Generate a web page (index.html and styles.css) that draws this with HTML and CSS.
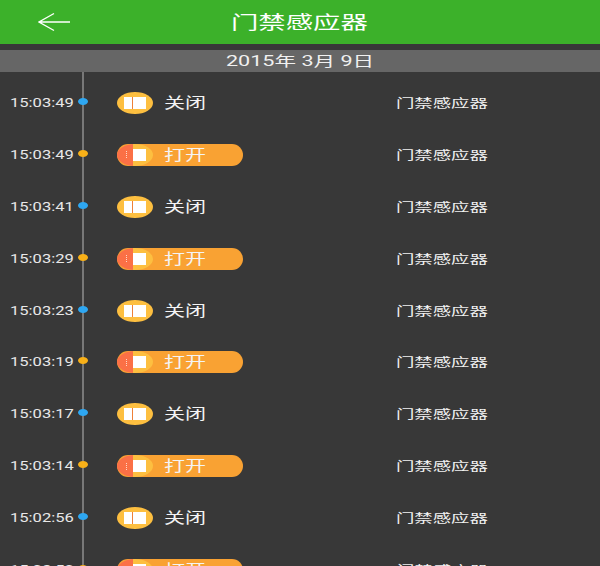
FILE: index.html
```html
<!DOCTYPE html>
<html lang="zh">
<head>
<meta charset="utf-8">
<title>门禁感应器</title>
<link rel="stylesheet" href="styles.css">
</head>
<body>
<div class="app">
  <header class="topbar">
    <svg class="back" width="32" height="20" viewBox="0 0 32 20" fill="none" stroke="#fff" stroke-width="1.3"><path d="M32 10H1M16 1.500 1 10l15 8.500"/></svg>
    <h1 class="title"><span class="stretch">门禁感应器</span></h1>
  </header>
  <div class="date"><span class="stretch">2015年 3月 9日</span></div>
  <main class="list">
    <div class="row closed"><div class="time"><span class="stretch">15:03:49</span></div><div class="rail"></div><div class="status"><div class="knob"><i class="grip"></i><b class="pad"></b></div><span class="state"><span class="stretch">关闭</span></span></div><div class="device"><span class="stretch">门禁感应器</span></div></div>
    <div class="row open"><div class="time"><span class="stretch">15:03:49</span></div><div class="rail"></div><div class="status"><div class="knob"><i class="grip"></i><b class="pad"></b></div><span class="state"><span class="stretch">打开</span></span></div><div class="device"><span class="stretch">门禁感应器</span></div></div>
    <div class="row closed"><div class="time"><span class="stretch">15:03:41</span></div><div class="rail"></div><div class="status"><div class="knob"><i class="grip"></i><b class="pad"></b></div><span class="state"><span class="stretch">关闭</span></span></div><div class="device"><span class="stretch">门禁感应器</span></div></div>
    <div class="row open"><div class="time"><span class="stretch">15:03:29</span></div><div class="rail"></div><div class="status"><div class="knob"><i class="grip"></i><b class="pad"></b></div><span class="state"><span class="stretch">打开</span></span></div><div class="device"><span class="stretch">门禁感应器</span></div></div>
    <div class="row closed"><div class="time"><span class="stretch">15:03:23</span></div><div class="rail"></div><div class="status"><div class="knob"><i class="grip"></i><b class="pad"></b></div><span class="state"><span class="stretch">关闭</span></span></div><div class="device"><span class="stretch">门禁感应器</span></div></div>
    <div class="row open"><div class="time"><span class="stretch">15:03:19</span></div><div class="rail"></div><div class="status"><div class="knob"><i class="grip"></i><b class="pad"></b></div><span class="state"><span class="stretch">打开</span></span></div><div class="device"><span class="stretch">门禁感应器</span></div></div>
    <div class="row closed"><div class="time"><span class="stretch">15:03:17</span></div><div class="rail"></div><div class="status"><div class="knob"><i class="grip"></i><b class="pad"></b></div><span class="state"><span class="stretch">关闭</span></span></div><div class="device"><span class="stretch">门禁感应器</span></div></div>
    <div class="row open"><div class="time"><span class="stretch">15:03:14</span></div><div class="rail"></div><div class="status"><div class="knob"><i class="grip"></i><b class="pad"></b></div><span class="state"><span class="stretch">打开</span></span></div><div class="device"><span class="stretch">门禁感应器</span></div></div>
    <div class="row closed"><div class="time"><span class="stretch">15:02:56</span></div><div class="rail"></div><div class="status"><div class="knob"><i class="grip"></i><b class="pad"></b></div><span class="state"><span class="stretch">关闭</span></span></div><div class="device"><span class="stretch">门禁感应器</span></div></div>
    <div class="row open"><div class="time"><span class="stretch">15:02:50</span></div><div class="rail"></div><div class="status"><div class="knob"><i class="grip"></i><b class="pad"></b></div><span class="state"><span class="stretch">打开</span></span></div><div class="device"><span class="stretch">门禁感应器</span></div></div>
  </main>
</div>
</body>
</html>
```
FILE: styles.css
```css
* { box-sizing: border-box; }
html, body { margin: 0; height: 100%; overflow: hidden; }
body { background: #383838; color: #fff; font-family: Roboto, "Noto Sans CJK SC", sans-serif; }
.app { width: 600px; height: 566px; overflow: hidden; display: flex; flex-direction: column; }
.stretch { display: inline-block; white-space: pre; transform: scaleX(1.5); transform-origin: 0 50%; }

.topbar { flex: none; height: 44px; background: #3cb12a; display: flex; align-items: center; padding-left: 38px; }
.back { flex: none; display: block; }
.title { margin: 2px 0 0 161px; font-size: 18px; font-weight: 400; line-height: 42px; }
.title .stretch { transform: scaleX(1.52); }

.date { flex: none; height: 22px; margin-top: 6px; background: #666; padding-left: 226px; font-size: 14px; line-height: 22px; color: #f0f0f0; }
.date .stretch { transform: scaleX(1.54); }

.list { flex: none; display: flex; flex-direction: column; }
.list::before { content: ""; flex: none; width: 2px; height: 5px; margin-left: 82px; background: #787878; }
.row { flex: none; height: 51.9px; display: flex; align-items: center; }

.time { flex: none; width: 82px; padding-left: 10px; font-size: 12px; color: #e8e8e8; }
.time .stretch { transform: scaleX(1.38); }

.rail { flex: none; align-self: stretch; width: 2px; background: #787878; position: relative; }
.rail::after { content: ""; position: absolute; left: -4px; top: 50%; margin-top: -5px; width: 10px; height: 7px; border-radius: 50%; }
.closed .rail::after { background: #2ea7f2; }
.open .rail::after { background: #f8b018; }

.status { flex: none; width: 126px; height: 22px; margin-left: 33px; border-radius: 11px; display: flex; align-items: center; }
.open .status { background: #f9a233; }

.knob { flex: none; width: 36px; height: 22px; border-radius: 50%; display: flex; align-items: center; }
.closed .knob { background: #fdbf40; justify-content: center; }
.open .knob { background: linear-gradient(90deg, #fb7046 16px, #fdbf40 16px); padding-left: 9px; }

.pad { display: block; background: #fff; }
.closed .pad { width: 22px; height: 12px; background: linear-gradient(90deg, #fff 8px, #ee8038 8px, #ee8038 9px, #fff 9px); }
.open .pad { width: 13px; height: 12px; margin-left: 6px; }

.grip { display: none; }
.open .grip { display: block; width: 1px; height: 7px; border-left: 1px dotted #ffd9c8; }

.state { flex: none; margin-left: 11px; font-size: 15px; line-height: 22px; color: #f4f4f4; }
.state .stretch { transform: scaleX(1.4); }

.device { flex: none; margin-left: 153px; padding-bottom: 1px; font-size: 12px; color: #f2f2f2; }
.device .stretch { transform: scaleX(1.53); }
```
